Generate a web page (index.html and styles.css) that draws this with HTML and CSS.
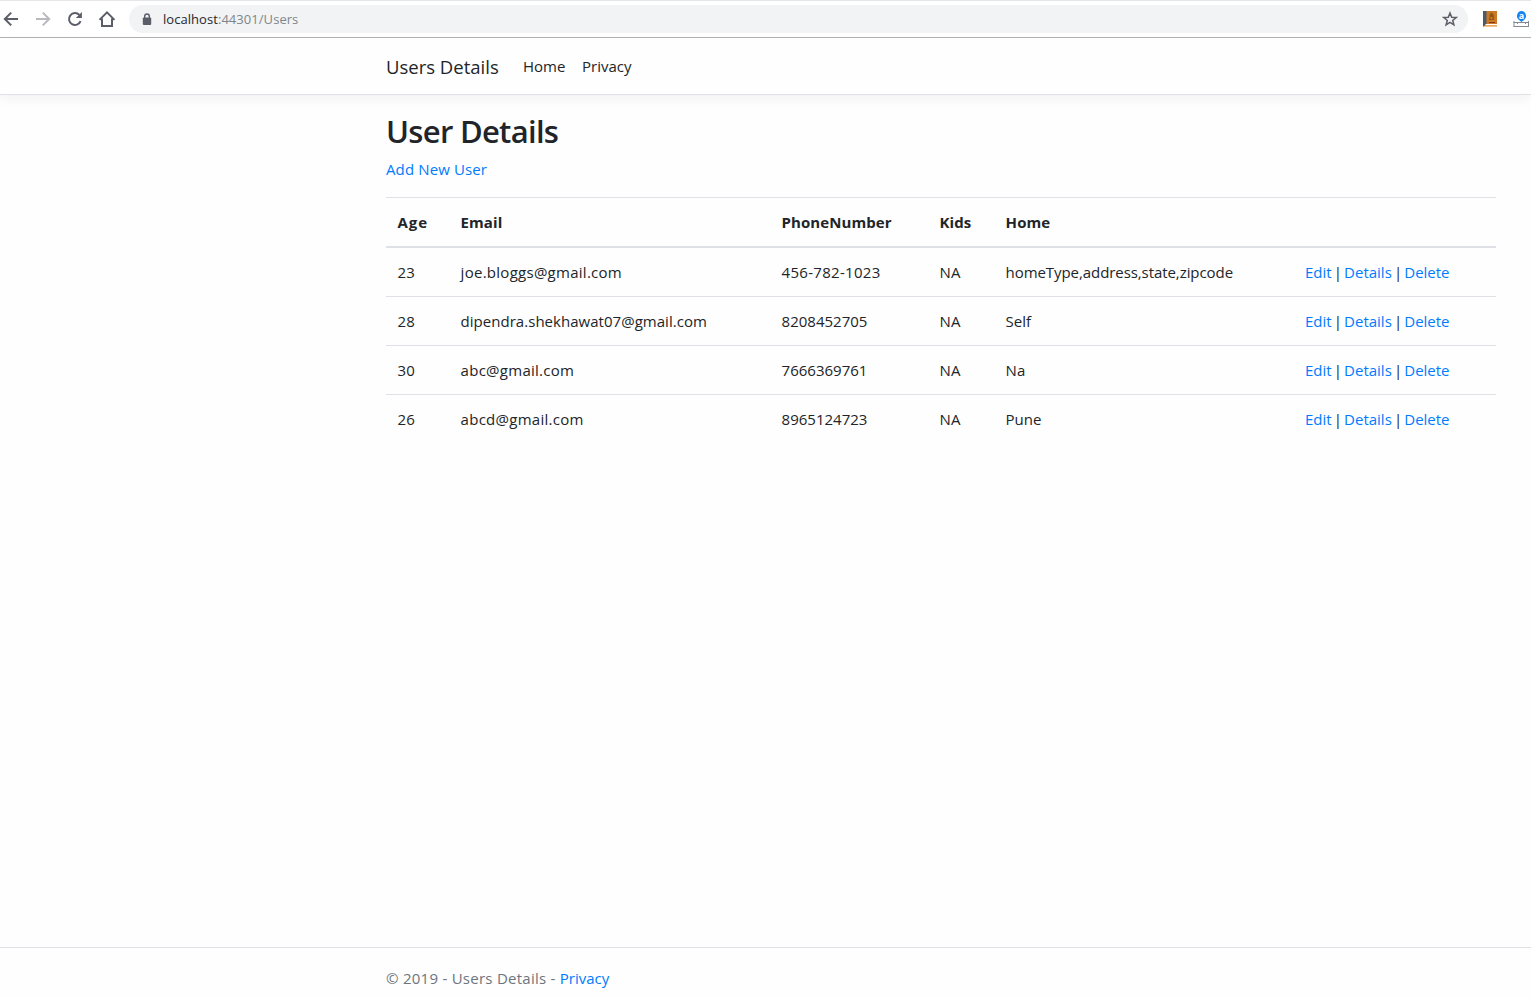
FILE: index.html
```html
<!DOCTYPE html>
<html lang="en">
<head>
<meta charset="utf-8">
<title>Users Details</title>
<link rel="stylesheet" href="styles.css">
</head>
<body>
<div class="toolbar">
  <div class="tools">
    <svg width="18" height="18" viewBox="0 0 18 18" class="icon"><path d="M16 9H3.200M9.200 2.600 2.800 9l6.400 6.400"/></svg>
    <svg width="18" height="18" viewBox="0 0 18 18" class="icon icon-off"><path d="M2 9h13.300M8.800 2.600 15.200 9l-6.400 6.400"/></svg>
    <svg width="18" height="18" viewBox="0 0 18 18" class="icon"><path d="M14.600 11.200A6 6 0 1 1 13.400 4.900"/><path class="solid" d="M15.900 2v6h-6z"/></svg>
    <svg width="18" height="18" viewBox="0 0 18 18" class="icon"><path d="M1.500 9.900 9 2.400l7.500 7.500M4 8.500V16h10V8.500"/></svg>
  </div>
  <div class="address">
    <svg class="lock" width="10" height="13" viewBox="0 0 10 13"><path class="solid" d="M1.800 4.500h6.400q1 0 1 1v5.600q0 1-1 1H1.800q-1 0-1-1V5.500q0-1 1-1z"/><path class="shackle" d="M2.700 5V3.300a2.300 2.300 0 0 1 4.600 0V5"/></svg>
    <span class="url"><span class="host">localhost</span>:44301/Users</span>
    <svg class="star" width="16" height="16" viewBox="0 0 16 16"><path d="m8 2 1.700 4.200 4.500.3-3.500 2.900 1.200 4.400L8 11.400l-3.900 2.400 1.200-4.400-3.500-2.900 4.500-.3z"/></svg>
  </div>
  <svg class="book" width="14" height="16" viewBox="0 0 14 16"><path fill="#c77b24" d="M0 0h14v13H0z"/><path fill="#505966" d="M0 0h3.500v13L1 15.500H0z"/><path fill="#965617" d="M8 1.500q2 .3 3 3V9H5.500l1-2V4z"/><path fill="#c77b24" d="M7.500 6h2v2h-2z"/><path fill="#9b3022" d="M6 11h6v1H6z"/><path fill="#fff" d="M3 13h10.500v1.300H2z"/><path fill="#e38b24" d="M2 14.300h12v1.200H1z"/></svg>
  <svg class="ruler" width="16" height="18" viewBox="0 0 16 18"><path fill="#1683ef" d="M8.500 1a5 5 0 0 1 2.500 9l-2.500 2L6 10A5 5 0 0 1 8.500 1z"/><text x="8.500" y="9" text-anchor="middle">a</text><path class="track" d="M1 11v6M15.500 11v6M.5 12.500h15M.5 16.500h15M4.500 12v2M12.500 12v2"/></svg>
</div>
<header class="nav">
  <div class="container nav-row">
    <a class="brand">Users Details</a>
    <a class="link home">Home</a>
    <a class="link privacy">Privacy</a>
  </div>
</header>
<main class="container main">
  <h1>User Details</h1>
  <p class="add"><a class="blue">Add New User</a></p>
  <table>
    <colgroup><col class="c-age"><col class="c-email"><col class="c-phone"><col class="c-kids"><col class="c-home"><col></colgroup>
    <thead><tr><th class="age">Age</th><th>Email</th><th>PhoneNumber</th><th>Kids</th><th>Home</th><th></th></tr></thead>
    <tbody>
      <tr><td>23</td><td class="mail">joe.bloggs@gmail.com</td><td class="dashed">456-782-1023</td><td>NA</td><td class="address-list">homeType,address,state,zipcode</td><td class="actions"><a class="blue">Edit</a> | <a class="blue">Details</a> | <a class="blue">Delete</a></td></tr>
      <tr><td>28</td><td class="mail-long">dipendra.shekhawat07@gmail.com</td><td>8208452705</td><td>NA</td><td>Self</td><td class="actions"><a class="blue">Edit</a> | <a class="blue">Details</a> | <a class="blue">Delete</a></td></tr>
      <tr><td>30</td><td class="mail">abc@gmail.com</td><td>7666369761</td><td>NA</td><td>Na</td><td class="actions"><a class="blue">Edit</a> | <a class="blue">Details</a> | <a class="blue">Delete</a></td></tr>
      <tr><td>26</td><td class="mail">abcd@gmail.com</td><td>8965124723</td><td>NA</td><td>Pune</td><td class="actions"><a class="blue">Edit</a> | <a class="blue">Details</a> | <a class="blue">Delete</a></td></tr>
    </tbody>
  </table>
</main>
<footer class="footer">
  <div class="container"><span class="copyright">© 2019 - Users Details - </span><a class="blue">Privacy</a></div>
</footer>
</body>
</html>
```
FILE: styles.css
```css
* { box-sizing: border-box; }
body {
  margin: 0;
  height: 997px;
  overflow: hidden;
  display: flex;
  flex-direction: column;
  background: #fefefe;
  color: #212529;
  font: 15px/24px "Open Sans", "Noto Sans", sans-serif;
}
.toolbar {
  flex: none;
  height: 38px;
  display: flex;
  align-items: center;
  border-top: 1px solid #e4e6e9;
  border-bottom: 1px solid #b2b3b5;
  background: #fff;
}
.tools { display: flex; gap: 14px; padding-left: 2px; width: 129px; flex: none; }
.icon { flex: none; fill: none; stroke: #5b5e68; stroke-width: 2; }
.icon-off { stroke: #b9babd; }
.solid { fill: #5b5e68; stroke: none; }
.address {
  width: 1339px;
  height: 28px;
  flex: none;
  display: flex;
  align-items: center;
  padding: 0 10px 0 13px;
  border-radius: 14px;
  background: #f1f3f4;
}
.lock { margin-right: 11px; }
.shackle { fill: none; stroke: #5b5e68; stroke-width: 1.4; }
.url { flex: 1; font-size: 13px; letter-spacing: .05px; color: #80868b; }
.host { color: #26282c; }
.star { fill: none; stroke: #5b5e68; stroke-width: 1.5; }
.book { flex: none; margin-left: 14.500px; }
.ruler { flex: none; margin-left: 16.500px; overflow: visible; }
.ruler text { font: bold 9px "Open Sans", sans-serif; fill: #fff; }
.track { fill: none; stroke: #858994; stroke-width: 1; }
.container { width: 1110px; margin-left: 386px; }
.nav {
  flex: none;
  height: 57px;
  border-bottom: 1px solid #dee2e6;
  box-shadow: 0 4px 12px rgba(0, 0, 0, .05);
}
.nav-row { display: flex; align-items: center; height: 56px; }
.brand { font-size: 18.500px; margin-right: 24px; padding-top: 1px; width: 113px; white-space: nowrap; }
.home { width: 59px; }
.main { flex: 1; padding-top: 17px; }
h1 { margin: 0 0 7px; font-size: 31px; line-height: 38px; font-weight: 600; letter-spacing: -.7px; }
.add { margin: 0 0 16px; letter-spacing: .12px; }
.blue { color: #007bff; }
table { width: 1110px; table-layout: fixed; border-collapse: separate; border-spacing: 0; }
th, td { padding: 12px 12px 12px 11.600px; height: 49px; text-align: left; border-top: 1px solid #dee2e6; white-space: nowrap; }
th { height: 51px; border-bottom: 2px solid #dee2e6; font-weight: 700; letter-spacing: .07px; }
tbody tr:first-child td { border-top: 0; height: 48px; }
.age { letter-spacing: .9px; }
.mail { letter-spacing: .27px; }
.mail-long { letter-spacing: .03px; }
.dashed { letter-spacing: .3px; }
.address-list { letter-spacing: -.07px; }
.actions { padding-left: 12px; word-spacing: -1.800px; }
.c-age { width: 63px; }
.c-email { width: 321px; }
.c-phone { width: 158px; }
.c-kids { width: 66px; }
.c-home { width: 299px; }
.footer { flex: none; height: 50px; padding-top: 18px; border-top: 1px solid #dee2e6; color: #6c757d; }
.copyright { letter-spacing: .26px; }
```
